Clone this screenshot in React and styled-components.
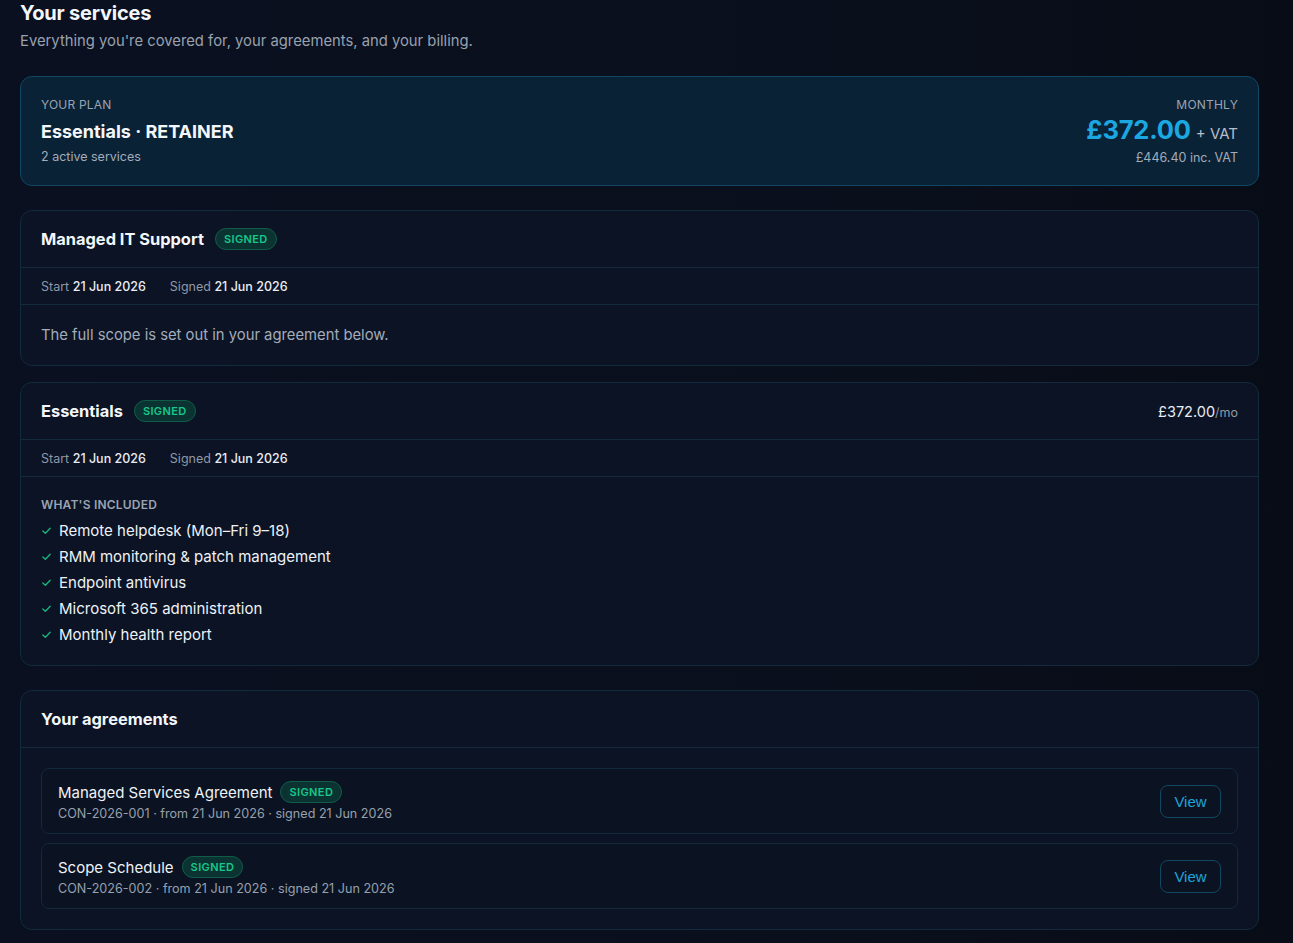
import React from "react";
import styled, { createGlobalStyle } from "styled-components";

const Global = createGlobalStyle`
  html, body { margin: 0; padding: 0; background: #0a0f1b; }
  body { font-family: Inter, "Noto Sans", sans-serif; color: #e6ebf2; -webkit-font-smoothing: antialiased; }
  * { box-sizing: border-box; }
`;

const Page = styled.div`
  min-height: 943px;
  background: linear-gradient(90deg, #0a1020 0%, #0a0f1c 70%, #080c16 100%);
  padding: 0 34px 14px 20px;
  display: flex;
  flex-direction: column;
`;

const Title = styled.h1`
  margin: 0;
  font-size: 20px;
  font-weight: 700;
  line-height: 26px;
  letter-spacing: -0.2px;
  color: #f3f6fa;
`;

const Subtitle = styled.p`
  margin: 4px 0 0;
  font-size: 14.8px;
  line-height: 22px;
  color: #98a1b0;
`;

const Stack = styled.div`
  display: flex;
  flex-direction: column;
  gap: ${(p) => p.$gap}px;
  margin-top: ${(p) => p.$mt || 0}px;
`;

const PlanCard = styled.section`
  background: #0a2236;
  border: 1px solid #0f4764;
  border-radius: 12px;
  padding: 20px 20px 20px;
  display: flex;
  justify-content: space-between;
  align-items: flex-start;
  height: 110px;
`;

const Eyebrow = styled.div`
  font-size: 12px;
  line-height: 16px;
  text-transform: uppercase;
  color: #9aa4b3;
  letter-spacing: 0.2px;
  font-weight: ${(p) => (p.$bold ? 600 : 400)};
`;

const PlanName = styled.div`
  margin-top: 7px;
  font-size: 18px;
  font-weight: 700;
  line-height: 24px;
  color: #f3f6fa;
`;

const Small = styled.div`
  margin-top: ${(p) => p.$mt ?? 5}px;
  font-size: 12.5px;
  line-height: 16px;
  color: #a3acba;
`;

const RightCol = styled.div`
  display: flex;
  flex-direction: column;
  align-items: flex-end;
`;

const PriceLine = styled.div`
  display: flex;
  align-items: baseline;
  gap: 5px;
  margin-top: 1px;
  line-height: 32px;
`;

const BigPrice = styled.span`
  font-size: 25.5px;
  font-weight: 700;
  color: #1ba8e2;
  letter-spacing: -0.2px;
`;

const Vat = styled.span`
  font-size: 15px;
  color: #b5bdc9;
`;

const Card = styled.section`
  background: #0b1324;
  border: 1px solid #13293c;
  border-radius: 12px;
  overflow: hidden;
`;

const CardHeader = styled.div`
  height: 57px;
  padding: 0 20px;
  display: flex;
  align-items: center;
  justify-content: space-between;
  border-bottom: 1px solid #13293c;
`;

const HeadLeft = styled.div`
  display: flex;
  align-items: center;
  gap: 11px;
`;

const CardTitle = styled.h2`
  margin: 0;
  font-size: 16.4px;
  font-weight: 700;
  color: #f3f6fa;
`;

const Badge = styled.span`
  display: inline-flex;
  align-items: center;
  height: 22px;
  padding: 0 8px;
  border-radius: 999px;
  background: #0a3331;
  border: 1px solid #115c48;
  color: #19c78b;
  font-size: 11px;
  font-weight: 600;
  letter-spacing: 0.4px;
`;

const Rate = styled.div`
  font-size: 14.5px;
  color: #e9edf3;
  span { font-size: 12.5px; color: #8f99a8; }
`;

const MetaRow = styled.div`
  height: 37px;
  padding: 0 20px;
  display: flex;
  align-items: center;
  gap: 24px;
  border-bottom: 1px solid #13293c;
  font-size: 12.5px;
  color: #8f99a8;
  b { font-weight: 500; color: #e9edf3; }
`;

const CardBody = styled.div`
  padding: ${(p) => p.$pad};
`;

const Muted = styled.p`
  margin: 0;
  font-size: 14.8px;
  line-height: 20px;
  color: #a3acba;
`;

const List = styled.ul`
  list-style: none;
  margin: 4px 0 0;
  padding: 0;
  display: flex;
  flex-direction: column;
`;

const Item = styled.li`
  display: flex;
  align-items: center;
  gap: 7px;
  height: 26px;
  font-size: 15px;
  color: #eef2f7;
`;

const Check = () => (
  <svg width="11" height="11" viewBox="0 0 12 12" fill="none">
    <path d="M2 6.5 L4.8 9 L10 3.5" stroke="#16b982" strokeWidth="1.4" strokeLinecap="round" strokeLinejoin="round" />
  </svg>
);

const AgreementList = styled.div`
  padding: 20px 20px 20px;
  display: flex;
  flex-direction: column;
  gap: 9px;
`;

const Agreement = styled.div`
  border: 1px solid #13293c;
  border-radius: 8px;
  background: #0b1322;
  padding: 0 16px;
  height: 66px;
  display: flex;
  align-items: center;
  justify-content: space-between;
`;

const AgTitleRow = styled.div`
  display: flex;
  align-items: center;
  gap: 8px;
  font-size: 15px;
  color: #eef2f7;
`;

const AgMeta = styled.div`
  margin-top: 3px;
  font-size: 12.6px;
  color: #97a0ae;
`;

const ViewButton = styled.button`
  width: 61px;
  height: 33px;
  border-radius: 8px;
  border: 1px solid #124761;
  background: transparent;
  color: #1ea3da;
  font-family: "Liberation Sans", Arial, sans-serif;
  font-size: 15px;
  cursor: pointer;
`;

const services = [
  { name: "Managed IT Support", scope: true },
  {
    name: "Essentials",
    price: "£372.00",
    items: [
      "Remote helpdesk (Mon–Fri 9–18)",
      "RMM monitoring & patch management",
      "Endpoint antivirus",
      "Microsoft 365 administration",
      "Monthly health report",
    ],
  },
];

const agreements = [
  { name: "Managed Services Agreement", meta: "CON-2026-001 · from 21 Jun 2026 · signed 21 Jun 2026" },
  { name: "Scope Schedule", meta: "CON-2026-002 · from 21 Jun 2026 · signed 21 Jun 2026" },
];

export default function App() {
  return (
    <>
      <Global />
      <Page>
        <Title>Your services</Title>
        <Subtitle>Everything you're covered for, your agreements, and your billing.</Subtitle>

        <Stack $gap={24} $mt={24}>
          <PlanCard>
            <div>
              <Eyebrow>Your plan</Eyebrow>
              <PlanName>Essentials · RETAINER</PlanName>
              <Small>2 active services</Small>
            </div>
            <RightCol>
              <Eyebrow>Monthly</Eyebrow>
              <PriceLine>
                <BigPrice>£372.00</BigPrice>
                <Vat>+ VAT</Vat>
              </PriceLine>
              <Small $mt={0}>£446.40 inc. VAT</Small>
            </RightCol>
          </PlanCard>

          <Stack $gap={16}>
            {services.map((s) => (
              <Card key={s.name}>
                <CardHeader>
                  <HeadLeft>
                    <CardTitle>{s.name}</CardTitle>
                    <Badge>SIGNED</Badge>
                  </HeadLeft>
                  {s.price && (
                    <Rate>
                      {s.price}
                      <span>/mo</span>
                    </Rate>
                  )}
                </CardHeader>
                <MetaRow>
                  <span>
                    Start <b>21 Jun 2026</b>
                  </span>
                  <span>
                    Signed <b>21 Jun 2026</b>
                  </span>
                </MetaRow>
                {s.scope ? (
                  <CardBody $pad="20px 20px 20px">
                    <Muted>The full scope is set out in your agreement below.</Muted>
                  </CardBody>
                ) : (
                  <CardBody $pad="20px 20px 18px">
                    <Eyebrow $bold>What's included</Eyebrow>
                    <List>
                      {s.items.map((it) => (
                        <Item key={it}>
                          <Check />
                          {it}
                        </Item>
                      ))}
                    </List>
                  </CardBody>
                )}
              </Card>
            ))}
          </Stack>

          <Card>
            <CardHeader>
              <CardTitle>Your agreements</CardTitle>
            </CardHeader>
            <AgreementList>
              {agreements.map((a) => (
                <Agreement key={a.name}>
                  <div>
                    <AgTitleRow>
                      {a.name}
                      <Badge>SIGNED</Badge>
                    </AgTitleRow>
                    <AgMeta>{a.meta}</AgMeta>
                  </div>
                  <ViewButton>View</ViewButton>
                </Agreement>
              ))}
            </AgreementList>
          </Card>
        </Stack>
      </Page>
    </>
  );
}
